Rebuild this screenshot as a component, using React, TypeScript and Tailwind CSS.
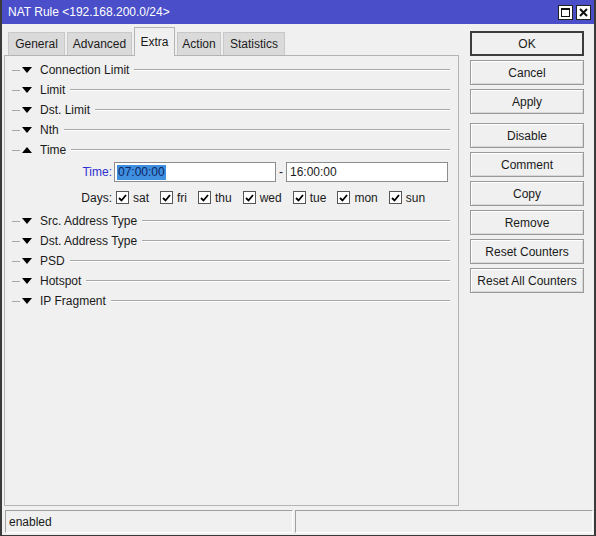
import React from "react";

const sections1 = ["Connection Limit", "Limit", "Dst. Limit", "Nth"];
const sections2 = ["Src. Address Type", "Dst. Address Type", "PSD", "Hotspot", "IP Fragment"];
const days = ["sat", "fri", "thu", "wed", "tue", "mon", "sun"];
const buttons1 = ["Cancel", "Apply"];
const buttons2 = ["Disable", "Comment", "Copy", "Remove", "Reset Counters", "Reset All Counters"];

function Tri({ up }: { up?: boolean }) {
  return (
    <svg width="10" height="6" viewBox="0 0 10 6" className="ml-[1px] shrink-0">
      {up ? <polygon points="0,6 10,6 5,0" fill="#000" /> : <polygon points="0,0 10,0 5,6" fill="#000" />}
    </svg>
  );
}

function Section({ label, up }: { label: string; up?: boolean }) {
  return (
    <div className="flex items-center h-[20px]">
      <div className="ml-[7px] w-[8px] border-t border-[#a8a8a8]" />
      <div className="ml-[1px]">
        <Tri up={up} />
      </div>
      <span className="ml-[8px] text-[#1a1a1a] leading-none">{label}</span>
      <div className="flex-1 ml-[5px] mr-[8px] border-t border-[#a8a8a8] border-b border-b-white" />
    </div>
  );
}

function Check({ label }: { label: string }) {
  return (
    <div className="flex items-center gap-[4px]">
      <div className="w-[13px] h-[13px] border border-[#555] bg-white flex items-center justify-center">
        <svg width="9" height="8" viewBox="0 0 9 8">
          <polyline points="1,4 3.5,6.5 8,1" fill="none" stroke="#000" strokeWidth="1.8" />
        </svg>
      </div>
      <span className="text-[#1a1a1a]">{label}</span>
    </div>
  );
}

function Btn({ label, primary }: { label: string; primary?: boolean }) {
  return (
    <div
      className={
        "h-[25px] flex items-center justify-center bg-[#f0f0f0] text-[#1a1a1a] " +
        (primary
          ? "border-2 border-[#3c3c3c]"
          : "border border-[#9a9a9a] shadow-[inset_1px_1px_0_#ffffff,inset_-1px_-1px_0_#d8d8d8]")
      }
    >
      {label}
    </div>
  );
}

export default function App() {
  const tabs = [
    { n: "General", w: "w-[57px]" },
    { n: "Advanced", w: "w-[65px]" },
    { n: "Extra", w: "w-[41px]", sel: true },
    { n: "Action", w: "w-[44px]" },
    { n: "Statistics", w: "w-[62px]" },
  ];
  return (
    <div className="w-[596px] h-[536px] flex flex-col bg-[#f0f0f0] border-l-2 border-r-2 border-b border-[#3a3a3a] font-['Liberation_Sans',Arial,sans-serif] text-[12px]">
      {/* Title bar */}
      <div className="h-[24px] bg-[#4a4fc9] flex items-center pl-[6px] pr-[3px] shrink-0">
        <span className="text-white text-[12px]">NAT Rule &lt;192.168.200.0/24&gt;</span>
        <div className="ml-auto flex gap-[3px]">
          <div className="w-[15px] h-[15px] bg-white border border-[#222] flex items-center justify-center">
            <div className="w-[9px] h-[9px] border border-[#111] border-t-2" />
          </div>
          <div className="w-[15px] h-[15px] bg-white border border-[#222] flex items-center justify-center">
            <svg width="9" height="9" viewBox="0 0 9 9">
              <path d="M1 1 L8 8 M8 1 L1 8" stroke="#111" strokeWidth="2" />
            </svg>
          </div>
        </div>
      </div>

      {/* Main */}
      <div className="flex-1 flex pl-[2px] pt-[3px] min-h-0">
        <div className="w-[455px] flex flex-col">
          <div className="h-[28px] flex items-end pl-[4px] gap-[2px] shrink-0">
            {tabs.map((t) =>
              t.sel ? (
                <div
                  key={t.n}
                  className={t.w + " h-[29px] -mb-px relative z-10 bg-[#f0f0f0] border border-b-0 border-[#b4b4b4] flex items-start justify-center pt-[5px] text-[#1a1a1a]"}
                >
                  {t.n}
                </div>
              ) : (
                <div
                  key={t.n}
                  className={t.w + " h-[23px] bg-[#dadada] border border-b-0 border-[#c8c8c8] flex items-center justify-center text-[#1a1a1a]"}
                >
                  {t.n}
                </div>
              )
            )}
          </div>
          <div className="flex-1 border border-[#b4b4b4] pt-[4px]">
            {sections1.map((s) => (
              <Section key={s} label={s} />
            ))}
            <Section label="Time" up />
            <div className="flex items-center h-[24px]">
              <span className="ml-[67px] w-[40px] text-right text-[#2f2fd0]">Time:</span>
              <div className="ml-[2px] w-[162px] h-[20px] bg-white border border-[#8c8c8c] flex items-center pl-[2px]">
                <span className="bg-[#3f8fe0] text-[#0d2560] leading-[15px] px-[1px]">07:00:00</span>
              </div>
              <span className="mx-[3px] text-[#1a1a1a]">-</span>
              <div className="w-[162px] h-[20px] bg-white border border-[#8c8c8c] flex items-center pl-[3px] text-[#1a1a1a]">
                16:00:00
              </div>
            </div>
            <div className="flex items-center h-[27px]">
              <span className="ml-[67px] w-[40px] text-right text-[#1a1a1a]">Days:</span>
              <div className="ml-[4px] flex items-center gap-[11px]">
                {days.map((d) => (
                  <Check key={d} label={d} />
                ))}
              </div>
            </div>
            {sections2.map((s) => (
              <Section key={s} label={s} />
            ))}
          </div>
        </div>
        <div className="ml-[11px] w-[114px] pt-[4px] flex flex-col">
          <Btn label="OK" primary />
          <div className="mt-[4px] flex flex-col gap-[4px]">
            {buttons1.map((b) => (
              <Btn key={b} label={b} />
            ))}
          </div>
          <div className="mt-[9px] flex flex-col gap-[4px]">
            {buttons2.map((b) => (
              <Btn key={b} label={b} />
            ))}
          </div>
        </div>
      </div>

      {/* Status bar */}
      <div className="h-[23px] mt-[4px] mb-[2px] flex pl-[3px] pr-[1px] gap-[2px] shrink-0">
        <div className="w-[288px] border border-t-[#a0a0a0] border-l-[#a0a0a0] border-r-white border-b-white flex items-center pl-[3px] text-[#1a1a1a]">
          enabled
        </div>
        <div className="flex-1 border border-t-[#a0a0a0] border-l-[#a0a0a0] border-r-white border-b-white" />
      </div>
    </div>
  );
}
